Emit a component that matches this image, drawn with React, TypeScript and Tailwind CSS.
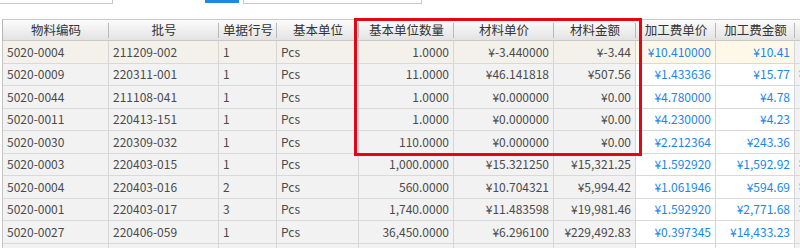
const cols = [
  { key: 'code', title: '物料编码', w: 106, align: 'left' },
  { key: 'batch', title: '批号', w: 110, align: 'left' },
  { key: 'line', title: '单据行号', w: 58, align: 'left' },
  { key: 'unit', title: '基本单位', w: 82, align: 'left' },
  { key: 'qty', title: '基本单位数量', w: 95, align: 'right' },
  { key: 'mprice', title: '材料单价', w: 100, align: 'right' },
  { key: 'mamount', title: '材料金额', w: 82, align: 'right' },
  { key: 'pprice', title: '加工费单价', w: 80, align: 'right', blue: true },
  { key: 'pamount', title: '加工费金额', w: 79, align: 'right', blue: true },
  { key: 'more', title: '', w: 60, align: 'left' },
];

const rows = [
  ['5020-0004', '211209-002', '1', 'Pcs', '1.0000', '¥-3.440000', '¥-3.44', '¥10.410000', '¥10.41', ''],
  ['5020-0009', '220311-001', '1', 'Pcs', '11.0000', '¥46.141818', '¥507.56', '¥1.433636', '¥15.77', '¥'],
  ['5020-0044', '211108-041', '1', 'Pcs', '1.0000', '¥0.000000', '¥0.00', '¥4.780000', '¥4.78', ''],
  ['5020-0011', '220413-151', '1', 'Pcs', '1.0000', '¥0.000000', '¥0.00', '¥4.230000', '¥4.23', ''],
  ['5020-0030', '220309-032', '1', 'Pcs', '110.0000', '¥0.000000', '¥0.00', '¥2.212364', '¥243.36', ''],
  ['5020-0003', '220403-015', '1', 'Pcs', '1,000.0000', '¥15.321250', '¥15,321.25', '¥1.592920', '¥1,592.92', '¥'],
  ['5020-0004', '220403-016', '2', 'Pcs', '560.0000', '¥10.704321', '¥5,994.42', '¥1.061946', '¥594.69', '¥'],
  ['5020-0001', '220403-017', '3', 'Pcs', '1,740.0000', '¥11.483598', '¥19,981.46', '¥1.592920', '¥2,771.68', '¥'],
  ['5020-0027', '220406-059', '1', 'Pcs', '36,450.0000', '¥6.296100', '¥229,492.83', '¥0.397345', '¥14,433.23', ''],
  ['', '', '', '', '', '', '', '', '', ''],
];

export default function App() {
  return (
    <div
      className="relative w-[800px] h-[248px] overflow-hidden bg-white text-[12px] text-[#444]"
      style={{ fontFamily: '"Noto Sans CJK SC", "Noto Sans", sans-serif' }}
    >
      {/* toolbar remnants at the top */}
      <div className="flex h-[19px] items-start">
        <div className="w-[113px] h-[4px] border-r border-b border-[#c9c9c9] bg-white" />
        <div className="ml-[92px] w-[34px] h-[3px] bg-[#1e88e5]" />
        <div className="ml-[4px] w-[179px] h-[4px] border-l border-r border-b border-[#c9c9c9] bg-white" />
      </div>

      {/* grid */}
      <div className="pl-[2px]">
        <div className="flex h-[22px] border-t border-b border-[#c8c8c8] border-l border-l-[#b5b5b5] bg-gradient-to-b from-[#fcfcfc] to-[#e3e3e3]">
          {cols.map((c, i) => (
            <div
              key={c.key}
              className="relative shrink-0 flex items-center justify-center text-[12.5px] text-[#333]"
              style={{ width: c.w }}
            >
              {c.title}
              {i < cols.length - 1 && (
                <span className="absolute right-0 top-[3px] bottom-[2px] w-px bg-[#b9b9b9]" />
              )}
            </div>
          ))}
        </div>

        {rows.map((r, ri) => (
          <div key={ri} className="flex h-[22.5px] border-b border-[#d9d9d9] border-l border-l-[#c5c5c5]">
            {cols.map((c, ci) => {
              const first = ri === 0;
              const bg = c.blue
                ? first
                  ? 'bg-[#fdf8e8]'
                  : 'bg-white'
                : first && ci < 9
                  ? 'bg-[#f4f1ea]'
                  : 'bg-[#f2f2f2]';
              return (
                <div
                  key={c.key}
                  className={`shrink-0 flex items-center border-r border-[#d6d6d6] ${bg} ${
                    c.align === 'right' ? 'justify-end pr-[4px]' : 'justify-start pl-[4px]'
                  } ${c.blue ? 'text-[#1b86ea]' : 'text-[#4a4a4a]'}`}
                  style={{ width: c.w }}
                >
                  {r[ci]}
                </div>
              );
            })}
          </div>
        ))}
      </div>

      {/* red highlight annotation */}
      <div className="absolute left-[354px] top-[18px] w-[288px] h-[138px] border-[3px] border-[#e30613] pointer-events-none" />
    </div>
  );
}
